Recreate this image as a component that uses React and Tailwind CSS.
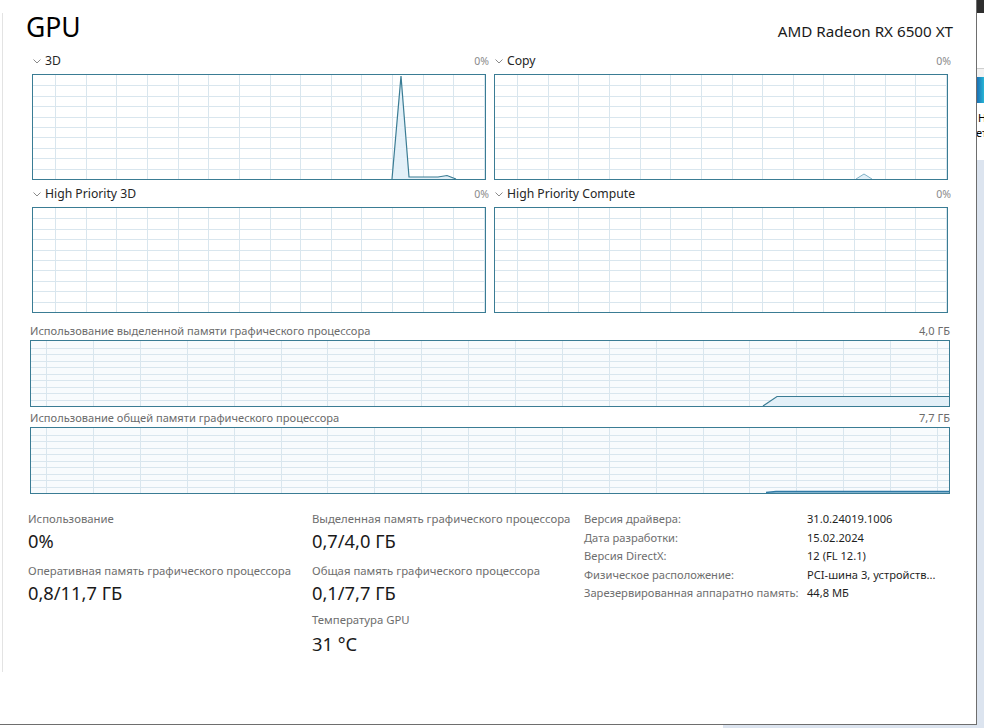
import React from 'react';

const GRID = '#d9e6ee';
const LINE = '#3a7c94';
const FILL = '#e3f0f8';

// grid + data drawn inside a bordered box
const Graph = ({ w, h, off, step, rows, bg = 'bg-white', children }) => {
  const iw = w - 2;
  const ih = h - 2;
  const xs = [];
  for (let x = off; x < iw; x += step) xs.push(Math.round(x) + 0.5);
  const ys = [];
  for (let i = 1; i < rows; i++) ys.push(Math.round((i * ih) / rows) + 0.5);
  return (
    <div className={`border border-[#3a7c94] ${bg}`} style={{ width: w, height: h }}>
      <svg width={iw} height={ih} className="block">
        {xs.map((x) => (
          <line key={'x' + x} x1={x} x2={x} y1={0} y2={ih} stroke={GRID} strokeWidth="1" />
        ))}
        {ys.map((y) => (
          <line key={'y' + y} x1={0} x2={iw} y1={y} y2={y} stroke={GRID} strokeWidth="1" />
        ))}
        {children}
      </svg>
    </div>
  );
};

const Chevron = () => (
  <svg width="8" height="5" viewBox="0 0 8 5" className="block">
    <path d="M0.5 0.5 L4 4 L7.5 0.5" fill="none" stroke="#8a8a8a" strokeWidth="1" />
  </svg>
);

const SmallHead = ({ title }) => (
  <div className="flex items-center leading-[16px] mr-[-3px]">
    <div className="ml-[1px] mr-[4px]">
      <Chevron />
    </div>
    <span className="text-[12.2px] text-[#262626]">{title}</span>
    <span className="ml-auto text-[10.5px] text-[#8a8a8a]">0%</span>
  </div>
);

const SmallGraph = ({ title, children }) => (
  <div className="flex flex-col">
    <SmallHead title={title} />
    <div className="mt-[5px]">
      <Graph w={454} h={106} off={22} step={30.65} rows={10}>
        {children}
      </Graph>
    </div>
  </div>
);

const MemHead = ({ title, value }) => (
  <div className="flex items-center leading-[16px] text-[11.1px] text-[#6b6b6b]">
    <span>{title}</span>
    <span className="ml-auto">{value}</span>
  </div>
);

const Stat = ({ label, value, className = '', gap = 'mt-[2px]' }) => (
  <div className={className}>
    <div className="text-[11.35px] leading-[16px] text-[#6e6e6e] whitespace-nowrap">{label}</div>
    <div className={`${gap} text-[18.3px] leading-[24px] text-[#1a1a1a]`}>{value}</div>
  </div>
);

const details = [
  ['Версия драйвера:', '31.0.24019.1006'],
  ['Дата разработки:', '15.02.2024'],
  ['Версия DirectX:', '12 (FL 12.1)'],
  ['Физическое расположение:', 'PCI-шина 3, устройств...'],
  ['Зарезервированная аппаратно память:', '44,8 МБ'],
];

export default function App() {
  return (
    <div
      className="w-[984px] h-[728px] overflow-hidden bg-white flex flex-col"
      style={{ fontFamily: '"Noto Sans", "Open Sans", sans-serif' }}
    >
      <div className="flex">
        {/* Task manager window */}
        <div className="w-[977px] h-[725px] border-r border-b border-[#6e6e6e] bg-white flex">
          <div className="w-[2px]" />
          <div className="mt-[13px] h-[659px] border-l border-[#e3e3e3] pl-[27px] pr-[26px] w-[974px]">
            {/* header */}
            <div className="flex items-baseline h-[28px]">
              <span className="ml-[-4px] text-[26.5px] leading-[28px] text-black">GPU</span>
              <span className="ml-auto mr-[-3px] text-[15.2px] leading-none text-[#1a1a1a]">AMD Radeon RX 6500 XT</span>
            </div>

            {/* engine graphs */}
            <div className="px-[2px] mt-[12px] grid grid-cols-[454px_454px] gap-x-[8px] gap-y-[6px]">
              <SmallGraph title="3D">
                <polygon points="359,104 368,1 376,102 405,102 414,100.5 423,104" fill={FILL} />
                <polyline points="359,104 368,1 376,102 405,102 414,100.5 423,104" fill="none" stroke={LINE} strokeWidth="1.2" />
              </SmallGraph>
              <SmallGraph title="Copy">
                <polygon points="361,104 369,99 377,104" fill={FILL} />
                <polyline points="361,104 369,99 377,104" fill="none" stroke="#7fb0c6" strokeWidth="1" />
              </SmallGraph>
              <SmallGraph title="High Priority 3D" />
              <SmallGraph title="High Priority Compute" />
            </div>

            {/* memory graphs */}
            <div className="mt-[10px]">
              <MemHead title="Использование выделенной памяти графического процессора" value="4,0 ГБ" />
              <div className="mt-[1px]">
                <Graph w={920} h={67} off={15} step={46.9} rows={10} bg="bg-[#f8fbfd]">
                  <polygon points="732,65 746,55.5 918,55.5 918,65" fill={FILL} />
                  <polyline points="732,65 746,55.5 918,55.5" fill="none" stroke={LINE} strokeWidth="1.2" />
                </Graph>
              </div>
            </div>
            <div className="mt-[3px]">
              <MemHead title="Использование общей памяти графического процессора" value="7,7 ГБ" />
              <div className="mt-[1px]">
                <Graph w={920} h={67} off={15} step={46.9} rows={10} bg="bg-[#f8fbfd]">
                  <polygon points="735,65 745,63.5 918,63.5 918,65" fill="#9cc4da" />
                  <polyline points="735,64.5 745,63.5 918,63.5" fill="none" stroke="#2f7aa6" strokeWidth="1.4" />
                </Graph>
              </div>
            </div>

            {/* stats */}
            <div className="mt-[17px] flex items-start ml-[-2px]">
              <div className="w-[284px]">
                <Stat label="Использование" value="0%" />
                <Stat className="mt-[10px]" label="Оперативная память графического процессора" value="0,8/11,7 ГБ" />
              </div>
              <div className="w-[272px]">
                <Stat label="Выделенная память графического процессора" value="0,7/4,0 ГБ" />
                <Stat className="mt-[10px]" label="Общая память графического процессора" value="0,1/7,7 ГБ" />
                <Stat className="mt-[7px]" gap="mt-[4px]" label="Температура GPU" value="31 °C" />
              </div>
              <div className="grid grid-cols-[223px_auto] content-start text-[11.15px] leading-[18.5px] mt-[-1px]">
                {details.map(([k, v]) => (
                  <React.Fragment key={k}>
                    <span className="text-[#6e6e6e] whitespace-nowrap">{k}</span>
                    <span className="text-[#1f1f1f] whitespace-nowrap">{v}</span>
                  </React.Fragment>
                ))}
              </div>
            </div>
          </div>
        </div>

        {/* window behind, on the desktop */}
        <div className="w-[7px] h-[725px] flex flex-col overflow-hidden">
          <div className="h-[13px] bg-[#2e2e2e]" />
          <div className="h-[55px] bg-white" />
          <div className="h-[1px] bg-[#cfcfcf]" />
          <div className="h-[8px] bg-[#f2f2f2]" />
          <div className="h-[26px] bg-gradient-to-r from-[#1d6fb3] to-[#27b6d6]" />
          <div className="h-[57px] bg-white text-[11px] leading-[15px] text-black whitespace-nowrap pt-[7px]">
            <div className="ml-[1px]">Н</div>
            <div className="ml-[-1px]">ет</div>
          </div>
          <div className="flex-1 bg-[#dce4ef]" />
        </div>
      </div>
      <div className="flex h-[3px]">
        <div className="w-[723px] bg-white" />
        <div className="flex-1 bg-[#dce4ef]" />
      </div>
    </div>
  );
}
